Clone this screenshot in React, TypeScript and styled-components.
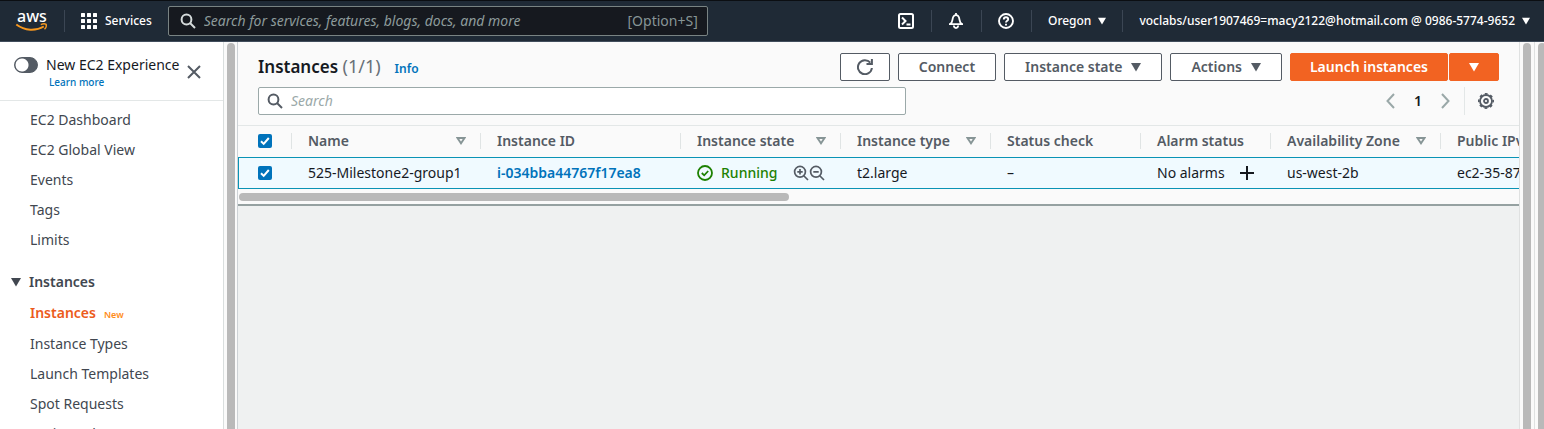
import React from "react";
import styled, { createGlobalStyle } from "styled-components";

const GlobalStyle = createGlobalStyle`
  * { box-sizing: border-box; }
  body {
    margin: 0;
    background: #eff1f1;
    color: #16191f;
    font-family: "Noto Sans", "Open Sans", sans-serif;
    font-size: 14px;
    line-height: 20px;
  }
  button, input { font: inherit; color: inherit; }
  a { text-decoration: none; color: inherit; }
`;

const Shell = styled.div`
  display: flex;
  flex-direction: column;
  height: 100vh;
  overflow: hidden;
`;

/* ---------- top navigation ---------- */

const TopNav = styled.header`
  display: flex;
  align-items: center;
  flex: none;
  height: 42px;
  padding: 0 14px 0 16px;
  background: #1f2a36;
  border-top: 1px solid #0b0e12;
  border-bottom: 1px solid #414d5c;
  color: #fff;
  font-size: 12px;
  font-weight: 500;
`;

const Divider = styled.span`
  width: 1px;
  height: 22px;
  margin: 0 16px;
  background: #3b4654;
`;

const NavButton = styled.button`
  display: flex;
  align-items: center;
  gap: 7px;
  min-width: 17px;
  padding: 0;
  border: 0;
  background: none;
  white-space: nowrap;
`;

const GlobalSearch = styled.label`
  display: flex;
  align-items: center;
  flex: 0 1 540px;
  height: 30px;
  margin-left: 16px;
  padding: 0 9px 0 11px;
  border: 1px solid #798383;
  border-radius: 2px;
  background: #16191f;
  color: #879596;
  font-size: 14px;
  font-weight: 400;
`;

const SearchGlyph = styled.span<{ $color: string }>`
  display: flex;
  color: ${(p) => p.$color};
`;

const GlobalInput = styled.input`
  flex: 1;
  min-width: 0;
  margin-left: 8px;
  padding: 0;
  border: 0;
  outline: 0;
  background: none;
  &::placeholder { color: #8d9b9b; opacity: 1; font-style: italic; }
`;

const NavEnd = styled.div`
  display: flex;
  align-items: center;
  margin-left: auto;
`;

/* ---------- side navigation ---------- */

const Body = styled.div`
  display: flex;
  flex: 1;
  min-height: 0;
`;

const Side = styled.nav`
  flex: 0 0 224px;
  overflow: hidden;
  background: #fff;
  border-right: 1px solid #d9dede;
`;

const Experience = styled.div`
  display: flex;
  align-items: center;
  height: 59px;
  padding: 2px 21px 0 14px;
  border-bottom: 1px solid #e3e7e7;
`;

const ExperienceLabel = styled.div`
  flex: 1;
  display: grid;
  grid-template-columns: 24px 1fr;
  column-gap: 8px;
  white-space: nowrap;
`;

const Toggle = styled.input`
  appearance: none;
  width: 24px;
  height: 16px;
  margin: 2px 0;
  border-radius: 8px;
  border: 1px solid #545b64;
  background: radial-gradient(circle at 7px 7px, #fff 6px, #545b64 7px);
`;

const LearnMore = styled.a`
  grid-column: 2;
  padding-left: 3px;
  color: #0073bb;
  font-size: 10px;
  font-weight: 500;
  line-height: 14px;
`;

const IconButton = styled.button`
  display: flex;
  padding: 0;
  border: 0;
  background: none;
  color: #545b64;
`;

const NavList = styled.ul`
  margin: 0;
  padding: 4px 0 0 30px;
  list-style: none;
  color: #414750;
`;

const SubList = styled(NavList)`
  padding-top: 5px;
`;

const NavItem = styled.li<{ $active?: boolean }>`
  height: ${(p) => (p.$active ? 32 : 30)}px;
  line-height: ${(p) => (p.$active ? 32 : 30)}px;
  ${(p) => p.$active && "color: #ec5b1c; font-weight: 600;"}
`;

const NewTag = styled.span`
  margin-left: 8px;
  color: #ff8c1a;
  font-size: 9px;
  line-height: 12px;
`;

const SectionTitle = styled.button`
  display: flex;
  align-items: center;
  gap: 8px;
  margin-top: 17px;
  padding: 0 11px;
  border: 0;
  background: none;
  color: #414750;
  font-weight: 600;
`;

/* ---------- scroll bars ---------- */

const Gutter = styled.div<{ $width: number; $edge?: "left" | "both" }>`
  flex: 0 0 ${(p) => p.$width}px;
  display: flex;
  padding: 1px 0 0 3px;
  overflow: hidden;
  background: #fafafa;
  border-right: 1px solid #cdd2d6;
  ${(p) => p.$edge === "both" && "border-left: 1px solid #dfe1e1; border-right-color: #dfe1e1;"}
  ${(p) => p.$edge === "left" && "border-right: 0;"}
`;

const Thumb = styled.span`
  flex: none;
  width: 8px;
  height: 200%;
  border-radius: 4px;
  background: #b9b9b9;
`;

const HorizontalTrack = styled.div`
  height: 15px;
  padding: 4px 1px;
`;

const HorizontalThumb = styled.div`
  width: 43%;
  height: 8px;
  border-radius: 4px;
  background: #b9b9b9;
`;

/* ---------- instances panel ---------- */

const Main = styled.main`
  flex: 1;
  min-width: 0;
`;

const Panel = styled.section`
  background: #fafafa;
  border-bottom: 2px solid #95a1a1;
`;

const TitleRow = styled.div`
  display: flex;
  align-items: center;
  padding: 11px 20px 0;
`;

const Title = styled.h1`
  margin: 0;
  font-size: 17px;
  line-height: 28px;
  font-weight: 600;
`;

const Count = styled.span`
  color: #687078;
  font-size: 18px;
  line-height: 20px;
  font-weight: 400;
`;

const Info = styled.a`
  margin: 4px 0 0 14px;
  color: #0073bb;
  font-size: 12px;
  font-weight: 600;
`;

const Actions = styled.div`
  display: flex;
  gap: 8px;
  margin-left: auto;
`;

const Button = styled.button<{ $primary?: boolean; $icon?: boolean }>`
  display: flex;
  align-items: center;
  justify-content: center;
  gap: 9px;
  height: 28px;
  padding: 0 ${(p) => (p.$icon ? 0 : p.$primary ? 19 : 20)}px;
  ${(p) => p.$icon && "width: 50px;"}
  border: 1px solid ${(p) => (p.$primary ? "#f26322" : "#545b64")};
  border-radius: 2px;
  background: ${(p) => (p.$primary ? "#f26322" : "#fff")};
  color: ${(p) => (p.$primary ? "#fff" : "#545b64")};
  font-weight: 600;
  white-space: nowrap;
`;

const SplitButton = styled.div`
  display: flex;
  gap: 1px;
`;

const FilterRow = styled.div`
  display: flex;
  align-items: center;
  padding: 6px 20px 10px;
`;

const Filter = styled.label`
  display: flex;
  align-items: center;
  flex: 0 1 648px;
  height: 28px;
  padding: 0 8px;
  border: 1px solid #9ba9a9;
  border-radius: 2px;
  background: #fff;
`;

const FilterInput = styled(GlobalInput)`
  &::placeholder { color: #9ba9a9; }
`;

const Pager = styled.div`
  display: flex;
  align-items: center;
  gap: 19px;
  margin: 0 5px 0 auto;
  font-weight: 600;
`;

const Settings = styled.div`
  display: flex;
  align-items: center;
  height: 28px;
  margin-left: -5px;
  padding-left: 13px;
  border-left: 1px solid #e3e7e7;
`;

const TableScroll = styled.div`
  overflow: hidden;
  border-top: 1px solid #e3e7e7;
`;

const Table = styled.table`
  width: 1430px;
  table-layout: fixed;
  border-collapse: separate;
  border-spacing: 0;
  white-space: nowrap;
`;

const Th = styled.th`
  height: 31px;
  padding: 0 0 2px;
  color: #545b64;
  text-align: left;
  font-weight: 600;
`;

const HeadCell = styled.div`
  display: flex;
  align-items: center;
  justify-content: space-between;
  height: 16px;
  padding: 0 14px 0 16px;
  border-left: 1px solid #e0e4e4;
`;

const Td = styled.td`
  height: 32px;
  padding: 0 0 0 17px;
  background: #f0faff;
  border: solid #0a93b5;
  border-width: 1px 0;
  &:first-child { border-left-width: 1px; padding-left: 19px; }
`;

const CheckHead = styled(Th)`
  padding-left: 20px;
`;

const CheckLabel = styled.label`
  display: grid;
  width: 14px;
  height: 14px;
`;

const CheckInput = styled.input`
  grid-area: 1 / 1;
  appearance: none;
  width: 14px;
  height: 14px;
  margin: 0;
  border-radius: 2px;
  background: #0073bb;
`;

const CheckMark = styled.svg`
  grid-area: 1 / 1;
  pointer-events: none;
`;

const CellFlex = styled.div`
  display: flex;
  align-items: center;
`;

const Running = styled.span`
  display: flex;
  align-items: center;
  gap: 8px;
  width: 96px;
  color: #1d8102;
  font-weight: 500;
`;

const InstanceLink = styled.a`
  color: #0073bb;
  font-weight: 600;
`;

const Alarm = styled.span`
  width: 82px;
`;

/* ---------- drawings ---------- */

const Svg = ({ size = 16, w = 2, children }: { size?: number; w?: number; children: React.ReactNode }) => (
  <svg width={size} height={size} viewBox="0 0 16 16" fill="none" stroke="currentColor" strokeWidth={w} aria-hidden="true">
    {children}
  </svg>
);

const Caret = ({ size = 10 }: { size?: number }) => (
  <svg width={size} height={size} viewBox="0 0 10 10" aria-hidden="true">
    <path d="M0 1h10L5 9.500z" fill="currentColor" />
  </svg>
);

const SortIcon = () => (
  <svg width="10" height="8" viewBox="0 0 10 8" fill="none" stroke="#879596" strokeWidth="1.900" aria-hidden="true">
    <path d="M1.500 1h7L5 6.300z" />
  </svg>
);

const SearchIcon = ({ color }: { color: string }) => (
  <SearchGlyph $color={color}>
    <Svg>
      <circle cx="6.500" cy="6.500" r="4.900" />
      <path d="M10 10l5 5" />
    </Svg>
  </SearchGlyph>
);

const AwsLogo = () => (
  <svg width="32" height="24" viewBox="0 0 32 24" overflow="visible" role="img" aria-label="AWS">
    <text x="1" y="13" fill="#fff" fontSize="16" fontWeight="500">aws</text>
    <path d="M.3 15.500c8.700 6.500 19.500 6.700 27.500 2" fill="none" stroke="#f7981f" strokeWidth="1.900" />
    <path d="M24.800 15.600c2-.9 4.200-.9 5.400-.3.400 1.500-.3 3.700-1.700 5" fill="none" stroke="#f7981f" strokeWidth="1.400" />
  </svg>
);

const Zoom = ({ plus }: { plus?: boolean }) => (
  <Svg w={1.7}>
    <circle cx="7" cy="6.800" r="5.400" />
    <path d="M11 11l4 4M4.300 6.800h5.400" />
    {plus && <path d="M7 4.100v5.400" />}
  </Svg>
);

const Check = ({ label }: { label: string }) => (
  <CheckLabel>
    <CheckInput type="checkbox" defaultChecked aria-label={label} />
    <CheckMark width="14" height="14" viewBox="0 0 14 14">
      <path d="M3 7.300l2.700 2.600L10.800 4" fill="none" stroke="#fff" strokeWidth="2" />
    </CheckMark>
  </CheckLabel>
);

const PageArrow = ({ d }: { d: string }) => (
  <svg width="9" height="16" viewBox="0 0 9 16" fill="none" stroke="#9aa8a8" strokeWidth="2" aria-hidden="true">
    <path d={d} />
  </svg>
);

const columns = [
  { name: "Name", width: 189, sort: true },
  { name: "Instance ID", width: 200 },
  { name: "Instance state", width: 160, sort: true },
  { name: "Instance type", width: 150, sort: true },
  { name: "Status check", width: 150 },
  { name: "Alarm status", width: 130 },
  { name: "Availability Zone", width: 170, sort: true },
  { name: "Public IPv4 DNS", width: 228 },
];

const links = ["EC2 Dashboard", "EC2 Global View", "Events", "Tags", "Limits"];
const instanceLinks = ["Instance Types", "Launch Templates", "Spot Requests", "Savings Plans"];

export default function App() {
  return (
    <Shell>
      <GlobalStyle />
      <TopNav>
        <AwsLogo />
        <Divider />
        <NavButton>
          <svg width="17" height="17" viewBox="0 0 17 17" fill="currentColor" aria-hidden="true">
            {[0, 6, 12].map((y) => [0, 6, 12].map((x) => <rect key={`${x}-${y}`} x={x} y={y} width="4" height="4" rx="0.500" />))}
          </svg>
          Services
        </NavButton>
        <GlobalSearch>
          <SearchIcon color="#d5dbdb" />
          <GlobalInput aria-label="Search AWS" placeholder="Search for services, features, blogs, docs, and more" />
          [Option+S]
        </GlobalSearch>
        <NavEnd>
          <NavButton aria-label="CloudShell">
            <Svg><rect x="1" y="1" width="14" height="14" rx="1.500" /><path d="M4 4.500L7.500 8 4 11.500M8.500 11.500h4" /></Svg>
          </NavButton>
          <Divider />
          <NavButton aria-label="Notifications">
            <Svg w={1.8}><path d="M1 11.200h14M2.300 11C4.200 9.500 4.300 8 4.600 6.200 5 3.500 6.300 2.200 8 2.200s3 1.300 3.400 4c.3 1.800.4 3.300 2.300 4.800M5.800 12.500c.2 1.700 1.200 2.500 2.200 2.500s2-.8 2.200-2.500M8 0v2" /></Svg>
          </NavButton>
          <Divider />
          <NavButton aria-label="Support">
            <Svg w={1.9}><circle cx="8" cy="8" r="7" /><path d="M5.800 6.500c0-1.500 1-2.300 2.200-2.300s2.200.8 2.200 2c0 1.500-2.200 1.500-2.200 3.300M8 10.700v1.900" /></Svg>
          </NavButton>
          <Divider />
          <NavButton>Oregon <Caret size={8} /></NavButton>
          <Divider />
          <NavButton>voclabs/user1907469=macy2122@hotmail.com @ 0986-5774-9652 <Caret size={8} /></NavButton>
        </NavEnd>
      </TopNav>

      <Body>
        <Side>
          <Experience>
            <ExperienceLabel>
              <Toggle type="checkbox" id="experience" />
              <label htmlFor="experience">New EC2 Experience</label>
              <LearnMore href="#learn">Learn more</LearnMore>
            </ExperienceLabel>
            <IconButton aria-label="Close">
              <Svg><path d="M2 2l12 12M14 2L2 14" /></Svg>
            </IconButton>
          </Experience>
          <NavList>
            {links.map((l) => <NavItem key={l}><a href="#nav">{l}</a></NavItem>)}
          </NavList>
          <SectionTitle><Caret /> Instances</SectionTitle>
          <SubList>
            <NavItem $active><a href="#instances">Instances<NewTag>New</NewTag></a></NavItem>
            {instanceLinks.map((l) => <NavItem key={l}><a href="#nav">{l}</a></NavItem>)}
          </SubList>
        </Side>
        <Gutter $width={14} aria-hidden="true"><Thumb /></Gutter>

        <Main>
          <Panel>
            <TitleRow>
              <Title>Instances <Count>(1/1)</Count></Title>
              <Info href="#info">Info</Info>
              <Actions>
                <Button $icon aria-label="Refresh">
                  <Svg><path d="M14.900 9A7 7 0 1 1 13.300 3.700" /><path d="M14.900 0v5H9.500" /></Svg>
                </Button>
                <Button>Connect</Button>
                <Button>Instance state <Caret /></Button>
                <Button>Actions <Caret /></Button>
                <SplitButton>
                  <Button $primary>Launch instances</Button>
                  <Button $primary $icon aria-label="More launch options"><Caret /></Button>
                </SplitButton>
              </Actions>
            </TitleRow>
            <FilterRow>
              <Filter>
                <SearchIcon color="#545b64" />
                <FilterInput aria-label="Search instances" placeholder="Search" />
              </Filter>
              <Pager>
                <IconButton aria-label="Previous page"><PageArrow d="M8 1L1.500 8 8 15" /></IconButton>
                1
                <IconButton aria-label="Next page"><PageArrow d="M1 1l6.500 7L1 15" /></IconButton>
                <Settings>
                  <IconButton aria-label="Preferences">
                    <Svg w={1.8}>
                      <circle cx="8" cy="8" r="6" />
                      <circle cx="8" cy="8" r="7.200" strokeDasharray="2.827 2.827" strokeDashoffset="1.413" strokeWidth="1.600" />
                      <circle cx="8" cy="8" r="2" />
                    </Svg>
                  </IconButton>
                </Settings>
              </Pager>
            </FilterRow>
            <TableScroll>
              <Table>
                <colgroup>
                  <col width="53" />
                  {columns.map((c) => <col key={c.name} width={c.width} />)}
                </colgroup>
                <thead>
                  <tr>
                    <CheckHead><Check label="Select all instances" /></CheckHead>
                    {columns.map((c) => (
                      <Th key={c.name}><HeadCell>{c.name}{c.sort && <SortIcon />}</HeadCell></Th>
                    ))}
                  </tr>
                </thead>
                <tbody>
                  <tr>
                    <Td><Check label="Select 525-Milestone2-group1" /></Td>
                    <Td>525-Milestone2-group1</Td>
                    <Td><InstanceLink href="#instance">i-034bba44767f17ea8</InstanceLink></Td>
                    <Td>
                      <CellFlex>
                        <Running>
                          <Svg w={1.8}><circle cx="8" cy="8" r="7" /><path d="M4.800 8l2.400 2.300 4-4.300" /></Svg>
                          Running
                        </Running>
                        <IconButton aria-label="Filter in"><Zoom plus /></IconButton>
                        <IconButton aria-label="Filter out"><Zoom /></IconButton>
                      </CellFlex>
                    </Td>
                    <Td>t2.large</Td>
                    <Td>–</Td>
                    <Td>
                      <CellFlex>
                        <Alarm>No alarms</Alarm>
                        <svg width="16" height="16" viewBox="0 0 16 16" fill="none" stroke="#16191f" strokeWidth="2" aria-hidden="true"><path d="M8 1v14M1 8h14" /></svg>
                      </CellFlex>
                    </Td>
                    <Td>us-west-2b</Td>
                    <Td>ec2-35-87-112-40.us-west-2</Td>
                  </tr>
                </tbody>
              </Table>
            </TableScroll>
            <HorizontalTrack aria-hidden="true"><HorizontalThumb /></HorizontalTrack>
          </Panel>
        </Main>
        <Gutter $width={16} $edge="both" aria-hidden="true"><Thumb /></Gutter>
        <Gutter $width={9} $edge="left" aria-hidden="true"><Thumb /></Gutter>
      </Body>
    </Shell>
  );
}
